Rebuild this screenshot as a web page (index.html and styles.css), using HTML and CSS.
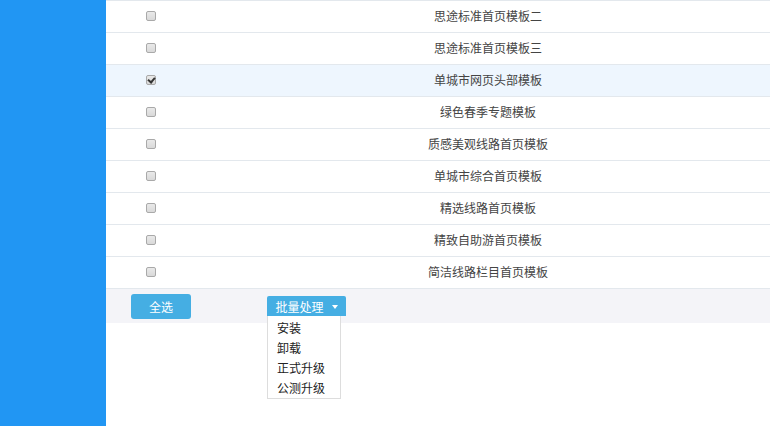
FILE: index.html
```html
<!DOCTYPE html>
<html>
	<head>
		<meta charset="UTF-8">
		<title>模板管理</title>
		<link rel="stylesheet" href="styles.css">
	</head>
	<body>
		<div class="page">
			<div class="side"></div>
			<div class="main">
				<div class="list">
					<div class="row">
						<div class="chk"><span class="box"></span></div>
						<div class="name">思途标准首页模板二</div>
					</div>
					<div class="row">
						<div class="chk"><span class="box"></span></div>
						<div class="name">思途标准首页模板三</div>
					</div>
					<div class="row on">
						<div class="chk"><span class="box checked"></span></div>
						<div class="name">单城市网页头部模板</div>
					</div>
					<div class="row">
						<div class="chk"><span class="box"></span></div>
						<div class="name">绿色春季专题模板</div>
					</div>
					<div class="row">
						<div class="chk"><span class="box"></span></div>
						<div class="name">质感美观线路首页模板</div>
					</div>
					<div class="row">
						<div class="chk"><span class="box"></span></div>
						<div class="name">单城市综合首页模板</div>
					</div>
					<div class="row">
						<div class="chk"><span class="box"></span></div>
						<div class="name">精选线路首页模板</div>
					</div>
					<div class="row">
						<div class="chk"><span class="box"></span></div>
						<div class="name">精致自助游首页模板</div>
					</div>
					<div class="row">
						<div class="chk"><span class="box"></span></div>
						<div class="name">简洁线路栏目首页模板</div>
					</div>
				</div>
				<div class="foot">
					<a href="javascript:;" class="btn all">全选</a>
					<div class="batch">
						<a href="javascript:;" class="btn drop">批量处理<i class="caret"></i></a>
						<ul class="menu">
							<li>安装</li>
							<li>卸载</li>
							<li>正式升级</li>
							<li>公测升级</li>
						</ul>
					</div>
				</div>
			</div>
		</div>
	</body>
</html>
```

FILE: styles.css
```css
*{
	margin: 0;
	padding: 0;
}
body{
	font-family: "Noto Sans CJK SC", "Liberation Sans", sans-serif;
	font-size: 12px;
	color: #444;
	background: #fff;
}
.page{
	display: flex;
	height: 426px;
	overflow: hidden;
}
.side{
	width: 106px;
	flex: none;
	background-color: #2196f3;
}
.main{
	flex: 1;
}
.list{
	border-top: 1px solid #e3e8ed;
}
.list .row{
	display: grid;
	grid-template-columns: 90px 1fr;
	height: 31px;
	padding-bottom: 2px;
	box-sizing: border-box;
	height: 32px;
	border-bottom: 1px solid #e3e8ed;
	align-items: center;
}
.list .row.on{
	background-color: #eef6fe;
}
.list .chk{
	display: flex;
	justify-content: center;
	padding-right: 1px;
}
/*仿旧版chrome灰色复选框*/
.list .box{
	width: 8px;
	height: 8px;
	border: 1px solid #a9a9a9;
	border-radius: 2px;
	background: linear-gradient(#e9e9e9, #d9d9d9);
	position: relative;
}
.list .box.checked::after{
	content: "";
	position: absolute;
	left: 2px;
	top: 0;
	width: 3px;
	height: 5px;
	border: solid #333;
	border-width: 0 2px 2px 0;
	transform: rotate(40deg);
}
.list .name{
	text-align: center;
	padding-left: 10px;
	line-height: 20px;
}
.foot{
	height: 34px;
	background-color: #f4f4f8;
	display: flex;
	align-items: center;
	padding-left: 25px;
	gap: 76px;
}
.btn{
	display: inline-flex;
	align-items: center;
	justify-content: center;
	color: #fff;
	text-decoration: none;
	font-size: 12px;
	background-color: #45aee3;
	border-radius: 3px;
}
.btn.all{
	width: 60px;
	height: 25px;
}
.batch{
	position: relative;
}
.btn.drop{
	width: 79px;
	height: 20px;
	border-radius: 2px 2px 0 0;
}
.btn .caret{
	width: 0;
	height: 0;
	border-left: 3px solid transparent;
	border-right: 3px solid transparent;
	border-top: 4px solid #fff;
	margin-left: 8px;
	margin-top: 2px;
}
.menu{
	list-style: none;
	position: absolute;
	left: 0;
	top: 100%;
	width: 72px;
	border: 1px solid #ddd;
	border-top: 0;
	padding-top: 2px;
	background: #fff;
	z-index: 2;
}
.menu li{
	line-height: 20px;
	padding-left: 9px;
	color: #222;
}
```
